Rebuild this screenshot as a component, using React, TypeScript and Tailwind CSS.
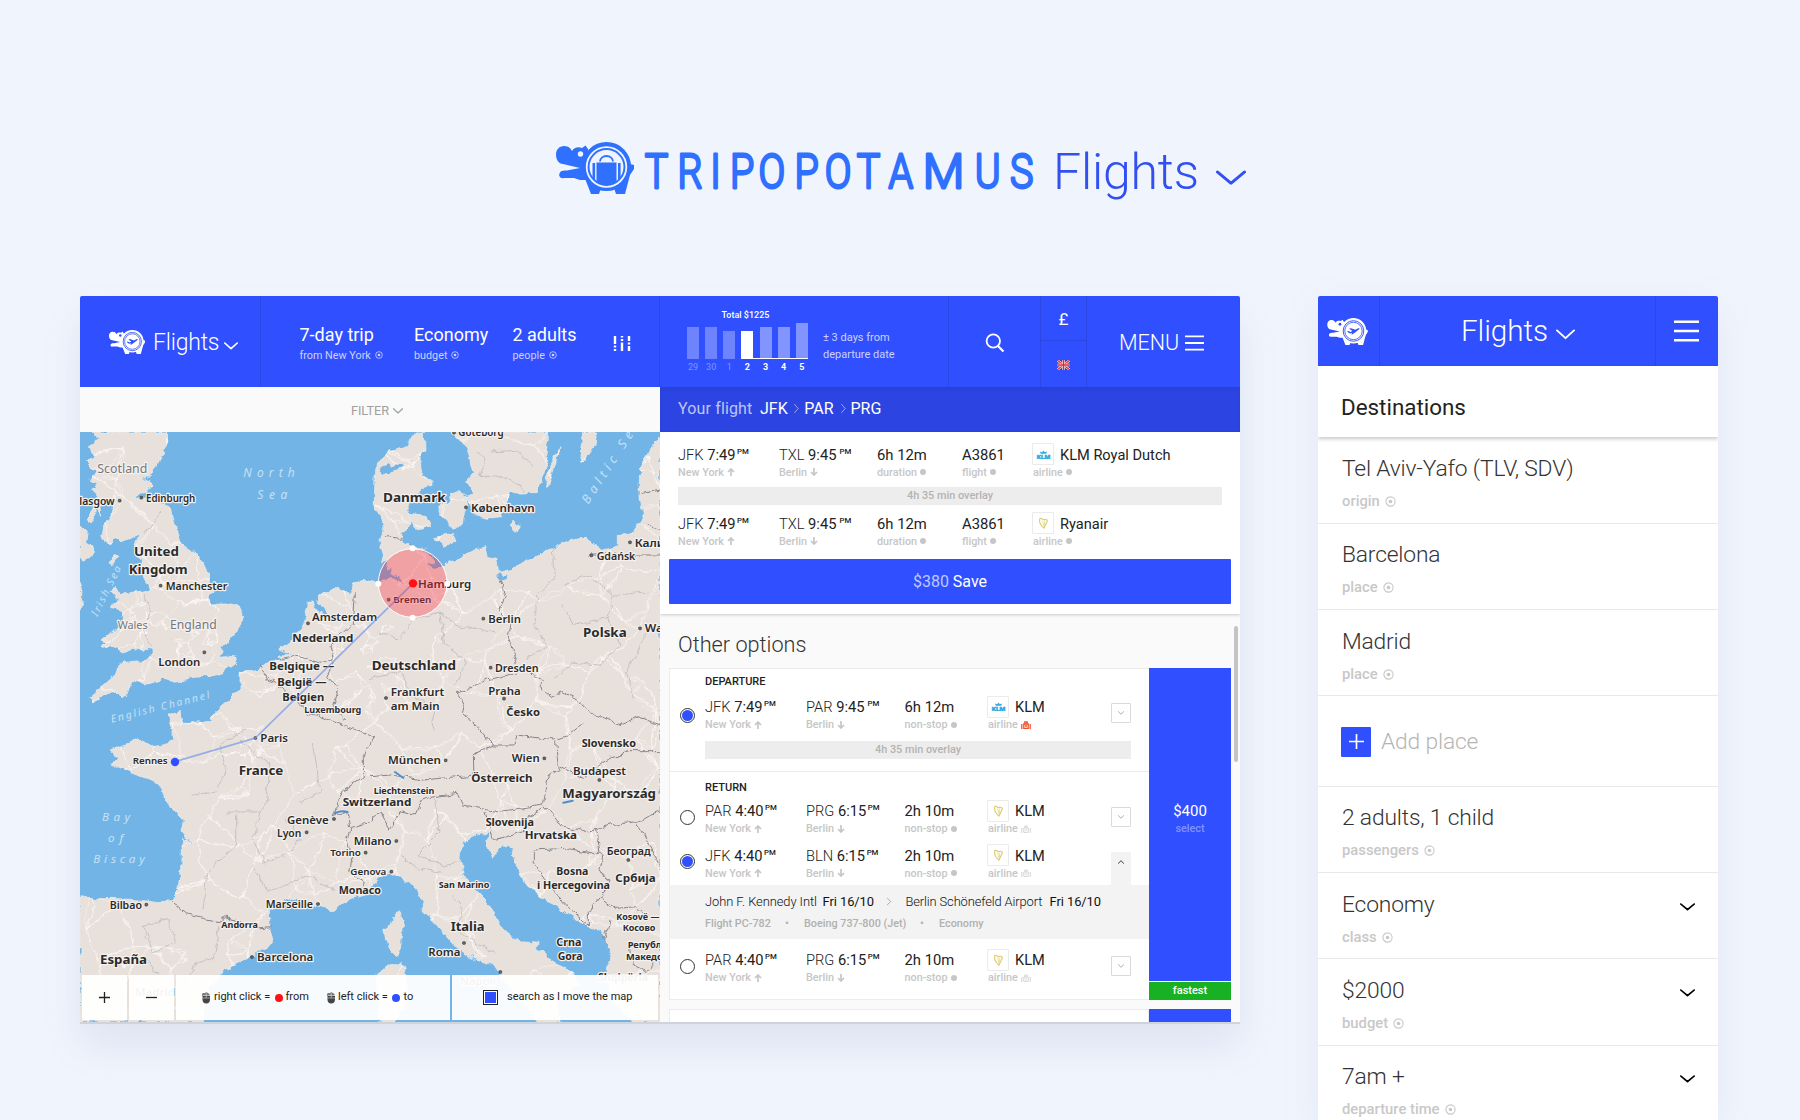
import React from "react";

const BLUE = "#304ffe";

/* ---------- small shared drawings ---------- */

function Hippo({ className, cut, variant }: { className: string; cut: string; variant: "case" | "plane" }) {
  return (
    <svg viewBox="0 0 78 52" className={className} fill="currentColor">
      <path d="M8 4C13 4 15 7 16 9C18 5.500 22 4.500 26 6L29.500 3.500L32 7L36 24L32 38H24L18 36H8C4 37 2 33.500 4 30.500C5 28.500 9 28.500 11 28.500L24 26L7 22C2 21.500 0 17 0 12.500C0 7.500 3.500 4 8 4Z" />
      <circle cx="50.500" cy="24.500" r="24.500" />
      <path d="M28 34L35 52H43L45 46H58L60 52H69L74 33L78 27V23L74 22Z" />
      <circle cx="24.500" cy="12" r="2.700" fill={cut} />
      <circle cx="50.500" cy="25" r="19.800" fill="none" stroke={cut} strokeWidth="1.800" />
      {variant === "case" ? (
        <g>
          <circle cx="50.500" cy="25" r="17" fill={cut} />
          <clipPath id="case-clip">
            <circle cx="50.500" cy="25" r="17.500" />
          </clipPath>
          <g clipPath="url(#case-clip)">
            <rect x="40.500" y="20.500" width="20" height="24" />
            <rect x="36.500" y="21" width="2.600" height="22" />
            <rect x="62" y="21" width="2.600" height="22" />
          </g>
          <path d="M44 19.500A6.500 5.500 0 0 1 57 19.500" fill="none" stroke="currentColor" strokeWidth="1.800" />
        </g>
      ) : (
        <g>
          <circle cx="50.500" cy="25" r="16.800" fill="none" stroke={cut} strokeWidth="1.600" />
          <path
            d="M38 26L41 25L44.500 27L48.500 25L42 20.500L45.500 19.500L54 22.500L59 20C61.500 19 63 20 61 22L49 31.500L46 32L48.500 28.500L43.500 30Z"
            fill={cut}
          />
        </g>
      )}
    </svg>
  );
}

function Chevron({ className, stroke = 2 }: { className: string; stroke?: number }) {
  return (
    <svg viewBox="0 0 20 12" preserveAspectRatio="none" className={className} fill="none" stroke="currentColor">
      <path d="M1 1.500L10 10L19 1.500" strokeWidth={stroke} strokeLinecap="round" strokeLinejoin="round" />
    </svg>
  );
}

function Target({ className }: { className: string }) {
  return (
    <svg viewBox="0 0 12 12" className={className}>
      <circle cx="6" cy="6" r="5" fill="none" stroke="currentColor" strokeWidth="1.200" />
      <circle cx="6" cy="6" r="2" fill="currentColor" />
    </svg>
  );
}

function Bars({ className, weight }: { className: string; weight: number }) {
  return (
    <svg viewBox="0 0 20 18" preserveAspectRatio="none" className={className} stroke="currentColor" strokeWidth={weight}>
      <path d="M0 1.500H20M0 9H20M0 16.500H20" />
    </svg>
  );
}

/* ---------- map ---------- */

const LAND = [
  // Great Britain
  "M30 0L55 24 25 44 42 69 20 89 48 114 30 144 55 159 38 179 50 194 22 264 38 266 45 229 62 256 60 219 80 209 95 219 88 264 70 284 62 312 80 334 110 320 125 330 180 306 168 339 165 370 190 384 185 424 210 474 190 476 165 480 130 486 108 469 92 479 115 504 90 524 120 534 132 569 110 594 60 624 75 634 60 649 110 642 130 662 170 649 222 655 200 684 150 689 115 699 100 734 60 769 30 794 40 809 75 789 110 784 135 794 160 749 215 754 250 739 290 748 340 736 380 734 430 722 465 694 468 679 440 674 410 676 430 659 420 644 440 639 455 614 480 584 488 554 480 529 455 516 420 516 395 519 385 494 402 474 385 451 385 434 370 394 340 359 300 334 290 294 280 259 275 229 245 209 200 194 160 200 185 180 217 164 205 144 185 149 222 114 240 74 265 34 269 12 262 0Z",
  "M0 279L25 304 20 329 40 344 35 374 10 389 0 374Z",
  "M0 450L9 484 5 524 0 534Z",
  "M90 390L105 366 115 372 98 399Z",
  // Continent
  "M1008 0L980 44 930 59 890 89 885 134 882 234 900 254 915 294 900 324 912 364 905 390 915 420 940 402 928 432 905 452 890 455 850 439 820 454 815 482 760 469 722 484 712 514 735 535 755 560 712 540 700 510 683 510 672 564 645 619 598 655 640 670 600 672 620 690 585 680 540 710 480 724 480 774 420 824 390 852 400 872 350 866 312 875 300 842 264 846 272 874 285 929 220 944 185 924 155 929 90 954 112 974 95 994 130 1014 170 1029 240 1059 250 1094 312 1169 306 1200 340 1245 308 1215 305 1309 290 1389 275 1409 235 1412 180 1404 100 1399 50 1400 0 1391L0 1770 370 1770 372 1705 390 1665 430 1619 500 1579 560 1549 580 1519 570 1489 568 1434 600 1409 640 1399 700 1419 760 1434 800 1409 830 1394 872 1380 895 1334 930 1324 1000 1359 1025 1399 1030 1439 1070 1479 1120 1539 1190 1584 1240 1599 1268 1640 1320 1700 1372 1770 1440 1770 1430 1700 1500 1660 1480 1625 1410 1579 1365 1549 1380 1534 1320 1529 1260 1479 1230 1419 1190 1379 1150 1329 1140 1279 1145 1229 1200 1204 1232 1200 1220 1229 1238 1282 1250 1259 1268 1239 1290 1246 1300 1279 1330 1339 1370 1389 1430 1419 1470 1449 1520 1479 1565 1500 1592 1549 1585 1619 1600 1709 1655 1770 1740 1770 1740 14 1720 39 1682 104 1680 194 1690 264 1650 306 1615 310 1615 344 1565 358 1530 328 1515 319 1470 324 1410 354 1295 409 1255 419 1250 378 1225 379 1218 344 1190 350 1120 390 1050 400 1085 364 1060 359 1020 347 990 348 965 324 970 304 992 264 980 234 1000 194 1028 169 1055 164 1057 146 1025 129 1020 74 1032 54 1030 0Z",
  // Danish islands
  "M1070 222L1100 215 1112 190 1140 179 1162 194 1155 234 1146 274 1130 290 1110 284 1090 262Z",
  "M985 243L1035 250 1049 284 1030 294 1000 284Z",
  "M1062 314L1120 304 1128 326 1090 339Z",
  // Sweden and Baltic islands
  "M1112 0L1160 44 1180 124 1160 144 1182 184 1158 194 1182 247 1220 259 1265 254 1288 184 1370 182 1400 94 1406 0Z",
  "M1440 44L1415 94 1395 154 1402 170 1425 100Z",
  "M1512 0L1500 54 1510 89 1545 44 1550 0Z",
  "M1290 279L1300 270 1318 284 1310 300Z",
  // Corsica and Sardinia
  "M960 1439L970 1479 966 1529 950 1574 925 1549 911 1499 932 1469Z",
  "M888 1624L932 1599 965 1589 976 1624 985 1700 945 1770 900 1770Z",
];

// Elbe estuary, Lübeck bay, Szczecin lagoon, Danish fjords, Garonne
const INLETS = [
  "M890 395L922 385 918 408 938 412 934 428 958 434 972 456 950 444 930 434 908 438 890 455Z",
  "M1040 402L1068 394 1058 376 1024 352 1060 352 1098 366 1094 402 1070 412Z",
  "M1245 430L1262 422 1270 432 1282 428 1280 446 1262 440Z",
  "M900 108L925 92 930 108 960 96 966 108 930 118 912 130Z",
];

const BORDERS = [
  "M1260 439L1275 494 1255 534 1290 574 1285 614 1310 700 1390 744 1380 764 1420 798 1440 774 1490 804 1540 844 1620 878 1670 854 1740 876",
  "M1310 722L1220 744 1135 784 1155 824 1150 844 1200 890 1240 939 1180 969 1182 1029 1030 1044 930 1029 870 1034",
  "M1240 939L1305 939 1310 909 1425 924 1470 909 1510 875",
  "M1430 929L1438 1009 1405 1029 1390 1119 1440 1179 1520 1199 1590 1179 1670 1169 1740 1139",
  "M1438 1000L1510 1039 1590 979 1650 959 1740 959",
  "M1060 1094L1135 1084 1150 1119 1250 1139 1390 1119M1215 1140L1240 1220 1330 1200 1335 1160 1390 1130",
  "M540 699L560 739 600 764 640 794 680 844 710 850 800 884 870 906 885 910 850 979 850 1034 800 1069 770 1119 760 1154 800 1139 810 1189 850 1179 900 1139 930 1189 960 1139 1000 1149 1020 1109 1060 1094",
  "M600 684L660 669 720 694 760 684 750 634 790 604 820 574 826 484M760 694L740 734 775 774 760 824 800 864",
  "M810 1189L800 1219 815 1279 810 1319 850 1349 830 1385",
  "M280 1414L320 1449 370 1459 420 1469 430 1454 480 1469 520 1489 575 1484",
  "M1360 1254L1460 1249 1570 1269 1560 1309 1590 1359 1560 1394 1525 1439 1525 1479 1470 1434 1420 1379 1360 1289Z",
  "M1550 1189L1560 1269M1670 1169L1700 1229 1738 1299M1560 1394L1610 1429 1670 1424 1700 1449M1590 1469L1570 1519M1650 1539L1660 1599 1700 1619 1740 1579",
  "M915 314L965 319M1530 369H1740M1700 274L1740 294M1685 184L1740 174",
];

const THIN_BORDERS = [
  "M190 304L210 290 245 240M190 484L212 534 190 594 218 645",
  "M1190 60L1215 85 1200 130 1290 140 1330 180M1230 60L1310 55 1360 100",
  "M1420 350L1425 440 1370 490 1365 580 1400 640 1340 680M1450 460L1530 430 1600 490 1580 560 1480 580 1450 520M1600 490L1700 480M1580 560L1620 640 1560 700 1480 690 1420 740M1700 600L1640 720 1660 800",
  "M960 620L1000 560 1080 540 1130 580 1250 600M1080 540L1090 640 1160 680 1130 760M870 740L960 720 1000 790M1000 790L1060 830 1060 900M900 600L960 620",
  "M330 1090L400 1080 440 1020 420 940 500 890M440 1140L540 1140 560 1110 570 1000 480 930M540 1140L520 1220 550 1290 620 1270 660 1220 620 1160M470 1150L470 1240 380 1320 370 1430M700 930L720 1080 660 1110M520 1300L560 1380 610 1360 680 1330 770 1380",
  "M190 1480L260 1460 290 1530 220 1560ZM420 1480L400 1580 340 1600 300 1690M100 1600L200 1580 240 1640",
  "M1060 1100L1080 1200 1010 1270 1090 1300 1140 1290M960 1270L1010 1310 1080 1320M1120 1390L1150 1440 1130 1490 1200 1540 1250 1560",
];

function buildRoads(): { minor: string; major: string } {
  let seed = 97;
  const rnd = () => {
    seed = (seed * 16807) % 2147483647;
    return seed / 2147483647;
  };
  const nodes: [number, number][] = [];
  for (let gy = 0; gy < 18; gy++) {
    for (let gx = 0; gx < 18; gx++) {
      nodes.push([(gx + rnd()) * 98, (gy + rnd()) * 98]);
    }
  }
  const clusters = [
    [260, 540, 110],
    [350, 640, 70],
    [820, 660, 90],
    [900, 780, 80],
    [500, 930, 50],
    [610, 720, 60],
  ];
  clusters.forEach(([cx, cy, r]) => {
    for (let i = 0; i < 34; i++) {
      nodes.push([cx + (rnd() - 0.5) * 2 * r, cy + (rnd() - 0.5) * 2 * r]);
    }
  });
  let minor = "";
  let major = "";
  nodes.forEach((a, i) => {
    const near = nodes
      .map((b, j) => ({ j, d: Math.hypot(a[0] - b[0], a[1] - b[1]) }))
      .filter((n) => n.j !== i)
      .sort((p, q) => p.d - q.d)
      .slice(0, 3);
    near.forEach((n, k) => {
      const b = nodes[n.j];
      const mx = (a[0] + b[0]) / 2 + (rnd() - 0.5) * n.d * 0.4;
      const my = (a[1] + b[1]) / 2 + (rnd() - 0.5) * n.d * 0.4;
      const seg = `M${a[0].toFixed(0)} ${a[1].toFixed(0)}Q${mx.toFixed(0)} ${my.toFixed(0)} ${b[0].toFixed(0)} ${b[1].toFixed(0)}`;
      if (k === 2 && n.d > 60) major += seg;
      else minor += seg;
    });
  });
  return { minor, major };
}

const ROADS = buildRoads();

type Label = [text: string, x: number, y: number, width: number, size: number, kind?: "bold" | "region" | "city"];

const LABELS: Label[] = [
  ["Scotland", 52, 124, 150, 36, "region"],
  ["lasgow", -2, 218, 106, 32],
  ["Edinburgh", 198, 209, 148, 32],
  ["United", 162, 371, 135, 39, "bold"],
  ["Kingdom", 146, 425, 177, 39, "bold"],
  ["Manchester", 257, 473, 185, 32],
  ["Wales", 113, 592, 90, 32, "region"],
  ["England", 270, 590, 140, 36, "region"],
  ["London", 235, 703, 126, 34],
  ["Amsterdam", 696, 567, 196, 34],
  ["Nederland", 637, 629, 183, 33, "bold"],
  ["Belgique —", 568, 715, 195, 33, "bold"],
  ["België —", 592, 761, 148, 33, "bold"],
  ["Belgien", 607, 807, 126, 33, "bold"],
  ["Luxembourg", 673, 842, 171, 27, "bold"],
  ["Göteborg", 1135, 11, 136, 34],
  ["Danmark", 909, 210, 188, 39, "bold"],
  ["København", 1173, 240, 191, 34],
  ["Кали", 1664, 344, 90, 32],
  ["Gdańsk", 1550, 383, 116, 32],
  ["Hamburg", 1014, 468, 160, 34],
  ["Bremen", 940, 513, 114, 28],
  ["Berlin", 1225, 574, 98, 33],
  ["Wa", 1694, 601, 55, 33],
  ["Polska", 1509, 615, 131, 38, "bold"],
  ["Deutschland", 875, 714, 253, 38, "bold"],
  ["Dresden", 1245, 720, 131, 33],
  ["Praha", 1225, 788, 97, 33],
  ["Česko", 1279, 851, 101, 33, "bold"],
  ["Frankfurt", 932, 791, 161, 33],
  ["am Main", 932, 834, 147, 33],
  ["Paris", 541, 930, 83, 33],
  ["Rennes", 158, 997, 105, 28],
  ["France", 476, 1029, 134, 38, "bold"],
  ["Switzerland", 788, 1122, 206, 33, "bold"],
  ["Liechtenstein", 881, 1085, 182, 26, "bold"],
  ["Genève", 621, 1175, 125, 33],
  ["Lyon", 591, 1214, 73, 33],
  ["Milano", 821, 1239, 114, 33],
  ["Torino", 751, 1271, 92, 28],
  ["Genova", 811, 1330, 108, 28],
  ["Monaco", 776, 1387, 127, 32, "bold"],
  ["Marseille", 557, 1428, 142, 32],
  ["Bilbao", 89, 1430, 97, 32],
  ["Andorra", 424, 1488, 110, 26, "bold"],
  ["España", 60, 1597, 141, 38, "bold"],
  ["Barcelona", 531, 1588, 169, 33],
  ["München", 924, 997, 159, 33],
  ["Wien", 1295, 991, 84, 33],
  ["Slovensko", 1505, 944, 163, 32, "bold"],
  ["Österreich", 1174, 1050, 184, 33, "bold"],
  ["Budapest", 1479, 1030, 159, 33],
  ["Magyarország", 1447, 1099, 281, 39, "bold"],
  ["Slovenija", 1217, 1182, 145, 32, "bold"],
  ["Hrvatska", 1334, 1222, 157, 33, "bold"],
  ["Београд", 1580, 1269, 132, 32],
  ["Србија", 1606, 1351, 121, 33, "bold"],
  ["Bosna", 1429, 1329, 96, 31, "bold"],
  ["i Hercegovina", 1371, 1371, 219, 31, "bold"],
  ["San Marino", 1076, 1369, 152, 27, "bold"],
  ["Italia", 1112, 1497, 102, 38, "bold"],
  ["Roma", 1045, 1571, 96, 34],
  ["Kosovë —", 1609, 1463, 129, 26, "bold"],
  ["Косово", 1628, 1498, 98, 26, "bold"],
  ["Crna", 1429, 1541, 75, 32, "bold"],
  ["Gora", 1433, 1583, 75, 32, "bold"],
  ["Републ", 1643, 1549, 102, 26, "bold"],
  ["Македо", 1638, 1585, 110, 26, "bold"],
  ["Madrid", 165, 1693, 120, 33],
  ["Napoli", 1140, 1660, 108, 33],
  ["Shqipëria", 1554, 1648, 150, 29, "bold"],
];

const DOTS: [number, number][] = [
  [119, 206], [184, 197], [242, 461], [373, 661], [684, 574], [1122, 2], [1158, 226], [1650, 331], [1534, 370],
  [926, 503], [1210, 560], [1680, 589], [1232, 707], [1272, 800], [918, 798], [526, 918], [762, 1161], [680, 1201],
  [949, 1227], [857, 1262], [934, 1319], [714, 1416], [199, 1418], [516, 1575], [1097, 985], [1393, 979],
  [1558, 1044], [1645, 1284], [1152, 1533], [1261, 1620],
];

function EuropeMap() {
  return (
    <svg viewBox="0 0 1740 1770" className="block h-full w-full" fontFamily='"Noto Sans", "Open Sans", sans-serif'>
      <defs>
        <filter id="rough" x="0" y="0" width="1740" height="1770" filterUnits="userSpaceOnUse">
          <feTurbulence type="fractalNoise" baseFrequency="0.035" numOctaves="3" seed="4" result="n" />
          <feDisplacementMap in="SourceGraphic" in2="n" scale="22" xChannelSelector="R" yChannelSelector="G" />
        </filter>
        <clipPath id="land">
          {LAND.map((d) => (
            <path key={d.slice(0, 20)} d={d} />
          ))}
        </clipPath>
      </defs>
      <rect width="1740" height="1770" fill="#72b4e6" />
      <g filter="url(#rough)">
        <g fill="#e8e0db" stroke="#eef0ef" strokeWidth="2">
          {LAND.map((d) => (
            <path key={d.slice(0, 20)} d={d} />
          ))}
        </g>
        <g clipPath="url(#land)" fill="none" stroke="#fbf8f5" strokeLinecap="round">
          <path d={ROADS.minor} strokeWidth="2.200" opacity="0.75" />
          <path d={ROADS.major} strokeWidth="3.400" opacity="0.8" />
        </g>
        {INLETS.map((d) => (
          <path key={d.slice(0, 20)} d={d} fill="#72b4e6" />
        ))}
        <g fill="none" strokeLinejoin="round">
          {THIN_BORDERS.map((d) => (
            <path key={d.slice(0, 20)} d={d} stroke="#b2b2b5" strokeWidth="2" />
          ))}
          {BORDERS.map((d) => (
            <path key={d.slice(0, 20)} d={d} stroke="#85858c" strokeWidth="3" />
          ))}
        </g>
      </g>
      <g fill="none" stroke="#4f8fcd" strokeWidth="6" strokeLinecap="round">
        <path d="M765 1143Q785 1135 802 1140M945 1020L970 1038M1450 1112L1478 1106" />
      </g>
      <g fill="#c4e1f6" fontStyle="italic">
        <text x="490" y="135" fontSize="36" textLength="154">North</text>
        <text x="532" y="201" fontSize="36" textLength="90">Sea</text>
        <text x="66" y="1167" fontSize="35" textLength="84">Bay</text>
        <text x="84" y="1229" fontSize="35" textLength="46">of</text>
        <text x="40" y="1294" fontSize="35" textLength="154">Biscay</text>
        <text transform="translate(95 872) rotate(-14)" fontSize="31" textLength="304">English Channel</text>
        <text transform="translate(52 555) rotate(-64)" fontSize="31" textLength="164">Irish Sea</text>
        <text transform="translate(1525 218) rotate(-57)" fontSize="38" textLength="250">Baltic Se</text>
      </g>
      <g fill="#6d6d6d" stroke="#333" strokeWidth="2">
        {DOTS.map(([x, y]) => (
          <rect key={`${x}-${y}`} x={x - 4} y={y - 4} width="8" height="8" rx="2" />
        ))}
      </g>
      {LABELS.map(([text, x, y, width, size, kind]) => (
        <text
          key={text}
          x={x}
          y={y}
          fontSize={size}
          textLength={width}
          lengthAdjust="spacingAndGlyphs"
          fontWeight={kind === "bold" ? 700 : kind === "region" ? 400 : 600}
          fill={kind === "region" ? "#75767c" : "#2b2b2b"}
          stroke="#f5f1ee"
          strokeWidth="7"
          strokeLinejoin="round"
          paintOrder="stroke"
        >
          {text}
        </text>
      ))}
      <path d="M285 989L526 918L999 454" fill="none" stroke="#6f95ea" strokeWidth="5" opacity="0.7" />
      <circle cx="998" cy="453" r="103" fill="#ff2a3c" fillOpacity="0.34" stroke="#fff" strokeWidth="3" />
      <g fill="#fff">
        <circle cx="998" cy="349" r="9" />
        <circle cx="998" cy="557" r="9" />
        <circle cx="895" cy="455" r="9" />
        <circle cx="1102" cy="455" r="9" />
      </g>
      <circle cx="999" cy="454" r="12.500" fill="#ff1016" />
      <circle cx="285" cy="990" r="12.500" fill={BLUE} />
    </svg>
  );
}

function Mouse() {
  return (
    <svg viewBox="0 0 10 13" className="h-[13px] w-[10px]">
      <path d="M1.500 5H9V8.500C9 11 7.500 12.500 5.200 12.500S1.500 11 1.500 8.500Z" fill="#444" />
      <path d="M1 5C.5 3 1.500 1.500 3 2S4.500 .5 6 1.500L8.500 3V4.500H2" fill="#777" />
      <path d="M5.200 2V7M1.500 7H9" stroke="#ddd" strokeWidth=".6" />
    </svg>
  );
}

/* ---------- desktop header ---------- */

function Fact({ title, sub, className }: { title: string; sub: string; className: string }) {
  return (
    <div className={`shrink-0 ${className}`}>
      <div className="text-[18px] leading-[22px]">{title}</div>
      <div className="mt-px flex items-center gap-1 text-[10.800px] leading-[17px] text-white/75">
        {sub}
        <Target className="size-[8px]" />
      </div>
    </div>
  );
}

const DAYS = [
  { d: "29", h: "h-[32px]", tone: "bg-white/30", text: "text-white/40" },
  { d: "30", h: "h-[32px]", tone: "bg-white/30", text: "text-white/40" },
  { d: "1", h: "h-[28px]", tone: "bg-white/30", text: "text-white/40" },
  { d: "2", h: "h-[28px]", tone: "bg-white", text: "font-bold" },
  { d: "3", h: "h-[32px]", tone: "bg-white/40", text: "font-bold" },
  { d: "4", h: "h-[32px]", tone: "bg-white/40", text: "font-bold" },
  { d: "5", h: "h-[36px]", tone: "bg-white/40", text: "font-bold" },
];

function Flag() {
  return (
    <svg viewBox="0 0 13 10" className="h-[10px] w-[13px]">
      <rect width="13" height="10" fill="#3a3f8f" />
      <path d="M0 0L13 10M13 0L0 10" stroke="#fff" strokeWidth="2.400" />
      <path d="M0 0L13 10M13 0L0 10" stroke="#d8283a" strokeWidth="1.300" />
      <path d="M6.500 0V10M0 5H13" stroke="#fff" strokeWidth="2.600" />
      <path d="M6.500 0V10M0 5H13" stroke="#d8283a" strokeWidth="1.500" />
    </svg>
  );
}

function Header() {
  return (
    <header className="flex h-[91px] bg-[#304ffe] text-white">
      <div className="flex w-[181px] items-center border-r border-black/10 pl-[29px]">
        <Hippo className="h-[24px] w-[36px]" cut="#304ffe" variant="plane" />
        <span className="ml-[8px] pt-[3px] text-[23px] font-light leading-[30px] tracking-[-0.200px]">Flights</span>
        <Chevron className="ml-[5px] mt-[8px] h-[8px] w-[14px]" stroke={2.4} />
      </div>
      <div className="flex w-[399px] items-start border-r border-black/10 pl-[38.500px] pt-[27.500px]">
        <Fact className="w-[114.500px]" title="7-day trip" sub="from New York" />
        <Fact className="w-[98.500px]" title="Economy" sub="budget" />
        <Fact className="w-[100px]" title="2 adults" sub="people" />
        <svg viewBox="0 0 18 16" className="mt-[11px] h-[16px] w-[18px]" stroke="currentColor" strokeWidth="2.400">
          <path d="M2 1V9M2 10.500V12.500M2 14V16M9 1V2.500M9 4V6M9 7.500V16M16 1V6M16 7.500V9.500M16 11V16" />
        </svg>
      </div>
      <div className="flex w-[289px] border-r border-black/10 pl-[27px]">
        <div className="flex w-[122px] flex-col pt-[13px]">
          <div className="pl-[34.500px] text-[9px] font-medium leading-[13px]">Total $1225</div>
          <div className="mt-px flex h-[36px] items-end gap-[6.150px]">
            {DAYS.map((x) => (
              <div key={x.d} className={`w-[12px] ${x.h} ${x.tone}`} />
            ))}
          </div>
          <div className="-mt-[1.500px] ml-[54px] h-[1.500px] w-[67px] bg-white" />
          <div className="mt-[3px] flex gap-[6.150px] text-[9px] leading-[11px]">
            {DAYS.map((x) => (
              <div key={x.d} className={`w-[12px] text-center ${x.text}`}>
                {x.d}
              </div>
            ))}
          </div>
        </div>
        <div className="ml-[14px] mt-[34px] text-[11px] leading-[16.500px] text-white/75">
          ± 3 days from
          <br />
          departure date
        </div>
      </div>
      <div className="flex w-[92px] items-center justify-center border-r border-black/10">
        <svg viewBox="0 0 20 20" className="mt-[2px] size-[20px]" fill="none" stroke="currentColor" strokeWidth="1.800">
          <circle cx="8.300" cy="8" r="6.700" />
          <path d="M13 13L18.500 18.500" strokeWidth="2.200" />
        </svg>
      </div>
      <div className="flex w-[46px] flex-col border-r border-black/10">
        <div className="flex h-[45px] items-center justify-center border-b border-black/10 pt-[3px] text-[17px]">£</div>
        <div className="flex flex-1 items-center justify-center pt-px">
          <Flag />
        </div>
      </div>
      <div className="flex flex-1 items-center pl-[32px] pt-[3px]">
        <span className="text-[21.500px] font-light leading-[26px]">MENU</span>
        <Bars className="ml-[6px] h-[16px] w-[19px]" weight={2} />
      </div>
    </header>
  );
}

/* ---------- flight rows ---------- */

function Arrow({ down }: { down?: boolean }) {
  return (
    <svg viewBox="0 0 8 8" className={`size-[8px] ${down ? "rotate-180" : ""}`} fill="none" stroke="currentColor" strokeWidth="1.700">
      <path d="M4 8V1M1 4L4 1L7 4" />
    </svg>
  );
}

function Dot() {
  return <span className="size-[6px] rounded-full bg-current" />;
}

function Case({ red }: { red?: boolean }) {
  return (
    <svg
      viewBox="0 0 10 8"
      className={`h-[8px] w-[10px] ${red ? "text-[#f0512d]" : "text-[#cfcfcf]"}`}
      fill="none"
      stroke="currentColor"
      strokeWidth={red ? 1.3 : 0.9}
    >
      <path d="M.8 3V8M9.200 3V8M2.800 3H7.200V7.400H2.800ZM3.800 3V1H6.200V3M4 5H6" />
    </svg>
  );
}

function AirlineLogo({ kind }: { kind: "klm" | "ryanair" }) {
  return (
    <div className="flex size-[22px] shrink-0 items-center justify-center rounded-[1px] border border-[#ebebeb] bg-white">
      {kind === "klm" ? (
        <svg viewBox="0 0 16 10" className="h-[9px] w-[15px]" fill="#2fa9e0">
          <path d="M5 4.300L4 1.800L6.500 2.500L8 .5L9.500 2.500L12 1.800L11 4.300Z" />
          <text x="0.500" y="9.600" fontSize="5.600" fontWeight="900" textLength="15" lengthAdjust="spacingAndGlyphs" stroke="#2fa9e0" strokeWidth=".4">
            KLM
          </text>
        </svg>
      ) : (
        <svg viewBox="0 0 12 14" className="h-[12px] w-[11px]" fill="none" stroke="#dccb68">
          <path d="M2 1.500C.5 5 2 9 6.500 13L10 5.500C11.500 3.500 9 2 6.500 3C5 3.500 4 1 2 1.500Z" strokeWidth="1.300" />
          <path d="M5 4L6.500 11M7.500 4L7 10" strokeWidth=".7" />
        </svg>
      )}
    </div>
  );
}

type Leg = {
  from: string;
  dep: string;
  to: string;
  arr: string;
  gap?: boolean;
  duration: string;
  label: string;
  flight?: string;
  logo: "klm" | "ryanair";
  airline: string;
  mark: "dot" | "red" | "gray";
};

const sub = "mt-[1px] flex items-center gap-[3px] text-[10.800px] font-medium leading-[13px] text-[#c6c6c6]";

function Time({ code, time, spaced }: { code: string; time: string; spaced?: boolean }) {
  return (
    <div className="flex whitespace-pre text-[14.700px] leading-[20px] text-[#222]">
      <span className="font-light">{code} </span>
      {time}
      <sup className={`top-0 text-[7.800px] font-medium leading-[14px] ${spaced ? "ml-[3px]" : "ml-[1.500px]"}`}>PM</sup>
    </div>
  );
}

function LegCells({ leg }: { leg: Leg }) {
  return (
    <div className="flex">
      <div className="w-[101px]">
        <Time code={leg.from} time={leg.dep} />
        <div className={sub}>
          New York <Arrow />
        </div>
      </div>
      <div className={leg.flight ? "w-[98px]" : "w-[98.500px]"}>
        <Time code={leg.to} time={leg.arr} spaced={leg.gap} />
        <div className={sub}>
          Berlin <Arrow down />
        </div>
      </div>
      <div className={leg.flight ? "w-[85px]" : "w-[82.500px]"}>
        <div className="text-[14.800px] leading-[20px] text-[#222]">{leg.duration}</div>
        <div className={sub}>
          {leg.label} <Dot />
        </div>
      </div>
      {leg.flight && (
        <div className="w-[70px]">
          <div className="text-[14.800px] leading-[20px] text-[#222]">{leg.flight}</div>
          <div className={sub}>
            flight <Dot />
          </div>
        </div>
      )}
      <div className="-mt-[1px]">
        <div className="flex h-[21px] items-center text-[14.600px] text-[#222]">
          <AirlineLogo kind={leg.logo} />
          <span className="ml-[6px] whitespace-nowrap pt-px leading-[20px]">{leg.airline}</span>
        </div>
        <div className={`${sub} pl-px`}>
          airline {leg.mark === "dot" ? <Dot /> : <Case red={leg.mark === "red"} />}
        </div>
      </div>
    </div>
  );
}

function Radio({ on }: { on?: boolean }) {
  return (
    <div className="flex size-[15px] items-center justify-center rounded-full border border-[#333] bg-white">
      {on && <div className="size-[11px] rounded-full bg-[#304ffe]" />}
    </div>
  );
}

function Option({ leg, on, open, low }: { leg: Leg; on?: boolean; open?: boolean; low?: boolean }) {
  return (
    <div className="flex h-[34px]">
      <div className={`w-[35px] pl-[9.500px] ${low ? "pt-[12px]" : "pt-[9.500px]"}`}>
        <Radio on={on} />
      </div>
      <div className="w-[406px] pt-px">
        <LegCells leg={leg} />
      </div>
      {open ? (
        <div className="mt-[7px] flex h-[33px] w-[20px] justify-center bg-[#f3f3f3] pt-[8px]">
          <Chevron className="h-[4px] w-[6px] rotate-180 text-[#333]" stroke={3} />
        </div>
      ) : (
        <div className="mt-[7px] flex h-[20px] w-[20px] items-center justify-center rounded-[1px] border border-[#d9d9d9]">
          <Chevron className="h-[4px] w-[6px] text-[#aaa]" stroke={3} />
        </div>
      )}
    </div>
  );
}

const RETURN_A: Leg = {
  from: "PAR", dep: "4:40", to: "PRG", arr: "6:15", duration: "2h 10m", label: "non-stop", logo: "ryanair", airline: "KLM", mark: "gray",
};

function Overlay({ className }: { className: string }) {
  return (
    <div className={`h-[18px] bg-[#ededed] text-center text-[10.900px] font-medium leading-[18px] text-[#b3b3b3] ${className}`}>
      4h 35 min overlay
    </div>
  );
}

function FlightPanel() {
  const first: Leg = {
    from: "JFK", dep: "7:49", to: "TXL", arr: "9:45", gap: true, duration: "6h 12m", label: "duration", flight: "A3861", logo: "klm", airline: "KLM Royal Dutch", mark: "dot",
  };
  return (
    <section className="flex h-full w-[580px] flex-col bg-[#fafafa]">
      <div className="flex h-[45px] shrink-0 items-center bg-[#2c45e2] pb-[2px] pl-[18px] text-[16px] text-white shadow-[inset_0_3px_4px_rgba(0,0,0,0.06)]">
        <span className="tracking-[0.150px] text-white/70">Your flight</span>
        <span className="ml-[7.500px]">JFK</span>
        <Chevron className="ml-[4px] mr-[3.500px] h-[5px] w-[9px] -rotate-90 text-white/60" />
        <span>PAR</span>
        <Chevron className="ml-[5px] mr-[3px] h-[5px] w-[9px] -rotate-90 text-white/60" />
        <span>PRG</span>
      </div>
      <div className="h-[182px] shrink-0 bg-white pt-[12.500px] shadow-[0_1px_3px_rgba(0,0,0,0.2)]">
        <div className="h-[42.500px] pl-[18px]">
          <LegCells leg={first} />
        </div>
        <Overlay className="ml-[18px] w-[544px]" />
        <div className="h-[54px] pl-[18px] pt-[8.500px]">
          <LegCells leg={{ ...first, logo: "ryanair", airline: "Ryanair" }} />
        </div>
        <div className="ml-[9px] flex h-[45px] w-[562px] items-center justify-center whitespace-pre rounded-[1px] bg-[#304ffe] pt-px text-[16px] text-white">
          <span className="text-white/70">$380 </span>Save
        </div>
      </div>
      <div className="relative flex-1 overflow-hidden pl-[9px]">
        <h2 className="h-[54px] pl-[9px] pt-[17px] text-[21.700px] font-light leading-[28px] text-[#333]">Other options</h2>
        <div className="flex h-[332px] w-[562px]">
          <div className="w-[480px] border border-r-0 border-[#ececec] bg-white">
            <div className="h-[103px] border-b border-[#ececec] pt-[6px]">
              <div className="h-[21px] pl-[35px] text-[11px] font-medium leading-[14px] text-[#222]">DEPARTURE</div>
              <Option
                on
                low
                leg={{ from: "JFK", dep: "7:49", to: "PAR", arr: "9:45", gap: true, duration: "6h 12m", label: "non-stop", logo: "klm", airline: "KLM", mark: "red" }}
              />
              <Overlay className="ml-[35px] mt-[11px] w-[426px]" />
            </div>
            <div className="h-[22px] pl-[35px] pt-[8.500px] text-[11px] font-medium leading-[14px] text-[#222]">RETURN</div>
            <div className="h-[45px] pt-[6px]">
              <Option leg={RETURN_A} />
            </div>
            <div className="h-[46px] pt-[5.500px]">
              <Option on open leg={{ ...RETURN_A, from: "JFK", to: "BLN" }} />
            </div>
            <div className="h-[54px] bg-[#f3f3f3] pl-[35px] pt-[5px]">
              <div className="flex h-[23px] items-center whitespace-pre text-[12.900px] text-[#111]">
                <span className="w-[117.500px] font-light tracking-[-0.060px]">John F. Kennedy Intl</span>
                <span className="w-[62.500px] tracking-[-0.050px]">Fri 16/10</span>
                <Chevron className="mr-[12.500px] h-[5px] w-[8px] -rotate-90 text-[#999]" />
                <span className="w-[144px] font-light tracking-[-0.120px]">Berlin Schönefeld Airport</span>
                <span className="tracking-[-0.050px]">Fri 16/10</span>
              </div>
              <div className="flex h-[22px] items-center pt-px text-[10.800px] font-medium text-[#b0b0b0]">
                <span className="w-[80px]">Flight PC-782</span>
                <span className="w-[19px]">•</span>
                <span className="w-[116px]">Boeing 737-800 (Jet)</span>
                <span className="w-[19px]">•</span>
                <span>Economy</span>
              </div>
            </div>
            <div className="pt-[10px]">
              <Option leg={RETURN_A} />
            </div>
          </div>
          <div className="flex w-[82px] flex-col gap-px text-center text-white">
            <div className="flex-1 bg-[#304ffe] pt-[133px]">
              <div className="text-[15px] leading-[20px]">$400</div>
              <div className="pt-px text-[10.800px] font-medium leading-[14px] text-white/40">select</div>
            </div>
            <div className="h-[18px] bg-[#18b123] text-[11px] font-medium leading-[18px]">fastest</div>
          </div>
        </div>
        <div className="mt-[9px] flex h-[20px] w-[562px]">
          <div className="w-[480px] border border-[#ececec] bg-white" />
          <div className="w-[82px] bg-[#304ffe]" />
        </div>
        <div className="absolute right-[2px] top-[12px] h-[136px] w-[4px] rounded-full bg-[#c4c4c4]" />
      </div>
    </section>
  );
}

function MapPanel() {
  return (
    <section className="flex w-[580px] flex-col">
      <div className="flex h-[45px] items-center justify-center gap-[4px] bg-[#fafafa] pt-[3px] text-[12.700px] text-[#a0a0a0]">
        <span className="pl-[14px]">FILTER</span>
        <Chevron className="h-[6px] w-[10px]" stroke={2.4} />
      </div>
      <div className="relative h-[590px] overflow-hidden">
        <EuropeMap />
        <div className="absolute bottom-[2px] left-[2px] flex h-[45px] w-[576px] gap-[2px] text-[11px] text-[#222]">
          <button className="flex w-[44.500px] items-center justify-center bg-white/95">
            <svg viewBox="0 0 11 11" className="size-[11px]" stroke="#222" strokeWidth="1.300">
              <path d="M5.500 0V11M0 5.500H11" />
            </svg>
          </button>
          <button className="flex w-[45.500px] items-center justify-center bg-white/95">
            <svg viewBox="0 0 11 11" className="size-[11px]" stroke="#222" strokeWidth="1.300">
              <path d="M0 5.500H11" />
            </svg>
          </button>
          <div className="flex w-[274px] items-center bg-white/95 pl-[25px]">
            <Mouse />
            <span className="ml-[3px] w-[61px]">right click =</span>
            <span className="size-[8px] rounded-full bg-[#ff1016]" />
            <span className="ml-[2.500px] w-[40.500px]">from</span>
            <Mouse />
            <span className="ml-[2px] w-[54px]">left click =</span>
            <span className="size-[8px] rounded-full bg-[#304ffe]" />
            <span className="ml-[3.500px]">to</span>
          </div>
          <div className="flex flex-1 items-center bg-white/95 pl-[31px]">
            <span className="flex size-[15px] items-center justify-center border border-[#222] bg-white">
              <span className="size-[11px] bg-[#304ffe]" />
            </span>
            <span className="ml-[9px]">search as I move the map</span>
          </div>
        </div>
      </div>
    </section>
  );
}

/* ---------- mobile ---------- */

const ROWS: { title: string; sub: string; drop?: boolean }[] = [
  { title: "2 adults, 1 child", sub: "passengers" },
  { title: "Economy", sub: "class", drop: true },
  { title: "$2000", sub: "budget", drop: true },
  { title: "7am +", sub: "departure time", drop: true },
];

function MobileRow({ title, sub: label, drop }: { title: string; sub: string; drop?: boolean }) {
  return (
    <div className="flex h-[86.300px] shrink-0 items-start justify-between border-b border-[#e8e8e8] pl-[24px] pr-[23px] pt-[17.500px]">
      <div>
        <div className="text-[22.800px] font-light leading-[28px] tracking-[-0.170px] text-[#333]">{title}</div>
        <div className="mt-[9px] flex items-center gap-[5px] text-[14.800px] font-medium leading-[18px] text-[#c8c8c8]">
          {label}
          <Target className="mt-px size-[11px]" />
        </div>
      </div>
      {drop && <Chevron className="mt-[12px] h-[8px] w-[15px] text-black" stroke={2.4} />}
    </div>
  );
}

function Mobile() {
  return (
    <div className="flex h-[824px] w-[400px] flex-col overflow-hidden rounded-t-[2px] bg-white">
      <header className="flex h-[70px] shrink-0 bg-[#304ffe] text-white">
        <div className="flex w-[62px] items-center border-r border-black/10 pl-[9px]">
          <Hippo className="h-[27px] w-[41px]" cut="#304ffe" variant="plane" />
        </div>
        <div className="flex flex-1 items-center justify-center pl-px">
          <span className="text-[29.700px] font-light leading-[40px] tracking-[-0.050px]">Flights</span>
          <Chevron className="ml-[8px] mt-[7px] h-[11px] w-[19px]" stroke={2} />
        </div>
        <div className="flex w-[63px] items-center border-l border-black/10 pl-[18px]">
          <Bars className="h-[22px] w-[25px]" weight={2} />
        </div>
      </header>
      <h2 className="z-10 h-[70.500px] shrink-0 bg-white pl-[23px] pt-[27px] text-[22.400px] leading-[28px] text-[#222] shadow-[0_2px_4px_rgba(0,0,0,0.22)]">
        Destinations
      </h2>
      <div className="h-[1px] shrink-0" />
      <MobileRow title="Tel Aviv-Yafo (TLV, SDV)" sub="origin" />
      <MobileRow title="Barcelona" sub="place" />
      <MobileRow title="Madrid" sub="place" />
      <div className="flex h-[90.400px] shrink-0 items-center border-b border-[#e8e8e8] pl-[23px] pt-[1.500px]">
        <div className="flex size-[30px] items-center justify-center rounded-[1px] bg-[#304ffe]">
          <svg viewBox="0 0 15 15" className="size-[15px]" stroke="#fff" strokeWidth="1.700">
            <path d="M7.500 0V15M0 7.500H15" />
          </svg>
        </div>
        <span className="ml-[10px] pt-px text-[22.800px] font-light tracking-[-0.170px] text-[#b5b5b5]">Add place</span>
      </div>
      {ROWS.map((r) => (
        <MobileRow key={r.title} {...r} />
      ))}
    </div>
  );
}

export default function App() {
  return (
    <div className="flex h-[1120px] w-[1800px] flex-col overflow-hidden bg-[#f0f5fd] font-['Roboto',sans-serif]">
      <div className="flex h-[296px] shrink-0 items-start pl-[556px] pt-[142px]">
        <Hippo className="h-[52px] w-[78px] text-[#2f70ff]" cut="#f0f5fd" variant="case" />
        <svg
          viewBox="0 0 400 60"
          className="ml-[10px] h-[60px] w-[400px]"
          fill="#2f70ff"
          stroke="#2f70ff"
          strokeWidth="2.800"
          strokeLinejoin="round"
          fontSize="48"
          fontWeight="300"
          textAnchor="middle"
        >
          <text transform="scale(0.82 1)" x="15.200 56 87.200 119.500 156 198.200 236.600 273.700 313.200" y="45.600">
            TRIPOPOTA
          </text>
          <text transform="scale(1 1)" x="299.500" y="45.600">
            M
          </text>
          <text transform="scale(0.82 1)" x="419 460.500" y="45.600">
            US
          </text>
        </svg>
        <span className="ml-[9px] mt-px text-[50px] font-light leading-[58px] tracking-[-0.200px] text-[#3250f2]">Flights</span>
        <Chevron className="ml-[17px] mt-[28px] h-[16px] w-[30px] text-[#3250f2]" stroke={2.1} />
      </div>
      <div className="flex items-start pl-[80px]">
        <div className="w-[1160px] overflow-hidden rounded-t-[2px] border-b-2 border-[#cfd3da] shadow-[0_22px_40px_rgba(60,80,140,0.1)]">
          <Header />
          <div className="flex h-[635px]">
            <MapPanel />
            <FlightPanel />
          </div>
        </div>
        <div className="ml-[78px] shadow-[0_10px_40px_rgba(60,80,140,0.08)]">
          <Mobile />
        </div>
      </div>
    </div>
  );
}
